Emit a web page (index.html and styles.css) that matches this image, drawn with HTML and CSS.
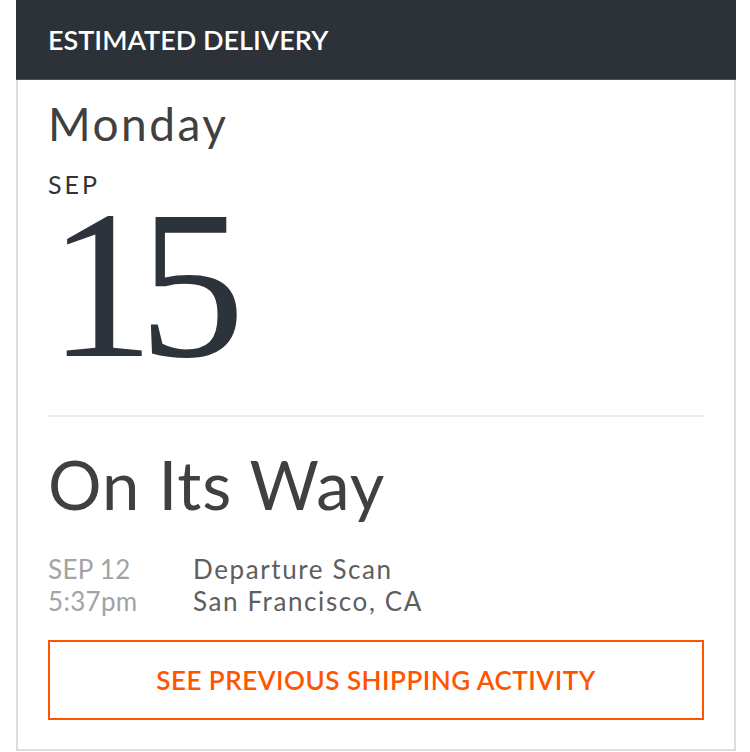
FILE: index.html
```html
<!DOCTYPE html>
<html>
<head>
<meta charset="utf-8">
<link rel="stylesheet" href="styles.css">
</head>
<body>
<div class="card">
  <div class="card-header">ESTIMATED DELIVERY</div>
  <div class="card-body">
    <div class="weekday">Monday</div>
    <div class="month">SEP</div>
    <div class="day">15</div>
    <div class="divider"></div>
    <div class="status">On Its Way</div>
    <div class="event">
      <div class="event-time">
        <div>SEP 12</div>
        <div>5:37pm</div>
      </div>
      <div class="event-desc">
        <div>Departure Scan</div>
        <div>San Francisco, CA</div>
      </div>
    </div>
    <div class="btn">SEE PREVIOUS SHIPPING ACTIVITY</div>
  </div>
</div>
</body>
</html>
```
FILE: styles.css
```css
html, body {
  margin: 0;
  padding: 0;
  background: #ffffff;
}
body {
  font-family: Lato, "Liberation Sans", sans-serif;
}
.card {
  margin-left: 16px;
  width: 720px;
  height: 751px;
  box-sizing: border-box;
  border: 2px solid #dcdcdc;
  border-top: none;
  display: flex;
  flex-direction: column;
}
.card-header {
  margin: 0 -2px;
  height: 80px;
  box-sizing: border-box;
  background: #2d3239;
  border-bottom: 1px solid #4a4e55;
  color: #ffffff;
  font-size: 27px;
  font-weight: 600;
  line-height: 80px;
  padding-left: 32px;
}
.card-body {
  padding: 0 30px;
  display: flex;
  flex-direction: column;
}
.weekday {
  font-size: 46px;
  letter-spacing: 2.5px;
  color: #404040;
  line-height: 56px;
  margin-top: 16px;
}
.month {
  font-size: 25px;
  letter-spacing: 3px;
  color: #333333;
  line-height: 28px;
  margin-top: 18px;
}
.day {
  font-family: "Liberation Serif", serif;
  font-size: 213px;
  letter-spacing: -16px;
  line-height: 172px;
  color: #2d333b;
}
.divider {
  height: 2px;
  background: #ececec;
  margin-top: 45px;
}
.status {
  font-size: 67px;
  letter-spacing: 1px;
  color: #404040;
  line-height: 80px;
  margin-top: 27px;
}
.event {
  display: flex;
  margin-top: 29px;
  font-size: 26px;
  line-height: 32px;
}
.event-time {
  width: 145px;
  color: #a3a3a3;
  letter-spacing: 0.3px;
}
.event-desc {
  color: #5e5e5e;
  letter-spacing: 1.6px;
}
.btn {
  margin-top: 23px;
  height: 80px;
  box-sizing: border-box;
  border: 2px solid #ff5500;
  color: #ff5500;
  font-size: 26px;
  letter-spacing: 0.5px;
  font-weight: 600;
  display: flex;
  align-items: center;
  justify-content: center;
}
```
